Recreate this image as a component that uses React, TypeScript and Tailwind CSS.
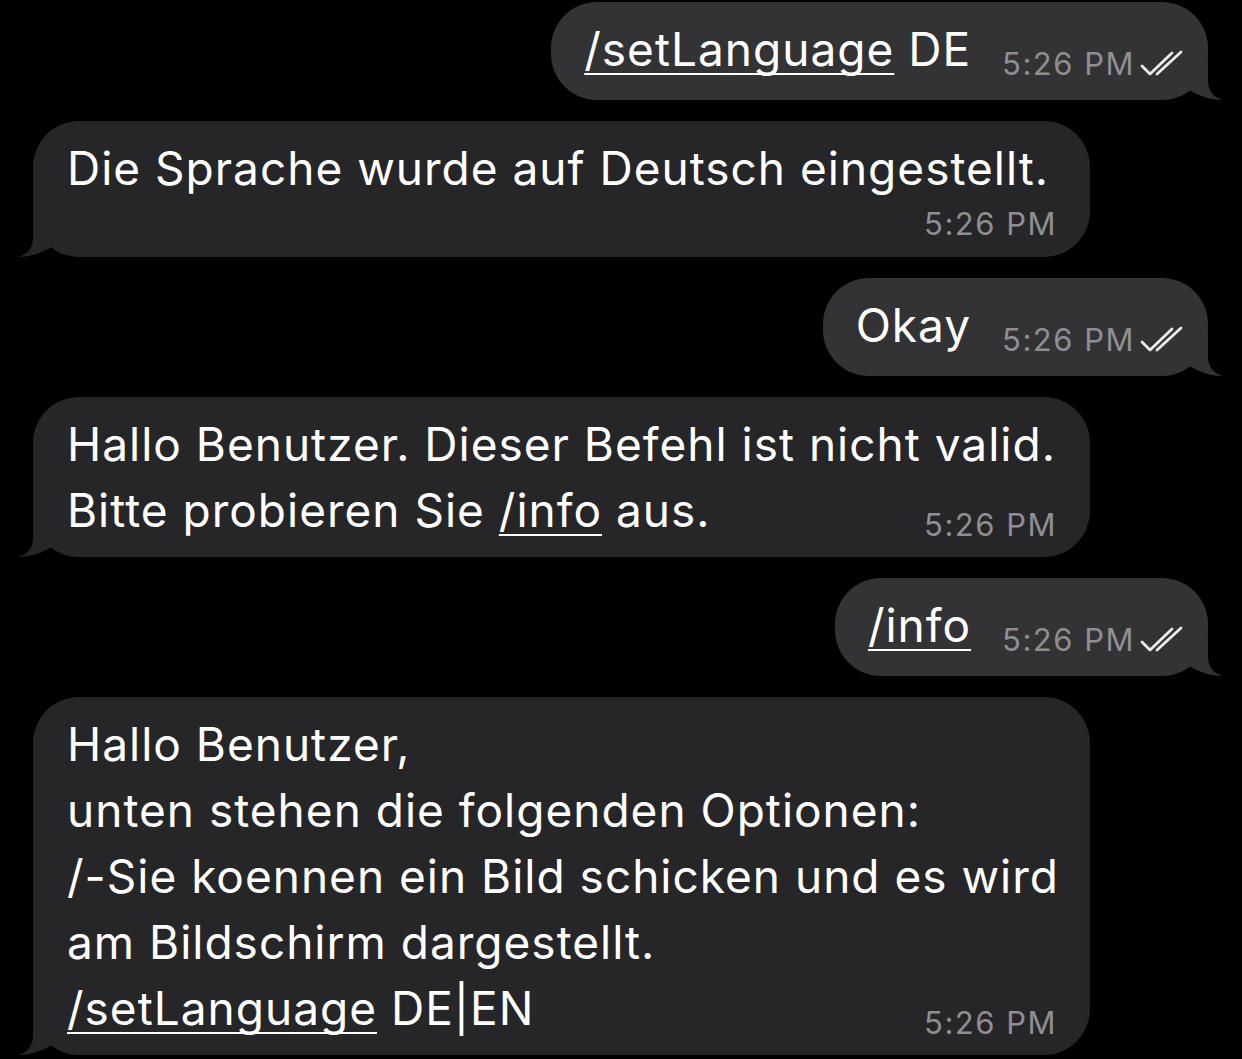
import React from "react";

const font = { fontFamily: "Inter, 'Noto Sans', sans-serif" };

const Tail = ({ side, color }: { side: "left" | "right"; color: string }) => (
  <svg
    width="60"
    height="40"
    viewBox="0 0 60 40"
    className={
      side === "left"
        ? "absolute bottom-0 left-[-15px]"
        : "absolute bottom-0 right-[-15px] -scale-x-100"
    }
  >
    <path
      d="M15 0 L15 20 C15 31 10 37 0 40 C10 40 22 37 33 30.5 L45 0 Z"
      fill={color}
    />
  </svg>
);

const Checks = () => (
  <svg width="46" height="28" viewBox="0 0 46 28" className="relative top-[1px] ml-[4px] mb-[6px]">
    <path
      d="M3 17 L11 25 L33 4 M18 25 L42 3"
      stroke="#ececee"
      strokeWidth="2.8"
      fill="none"
      strokeLinecap="round"
      strokeLinejoin="round"
    />
  </svg>
);

const Link = ({ children }: { children: React.ReactNode }) => (
  <span className="underline decoration-2 underline-offset-[7px] [text-decoration-skip-ink:none]">
    {children}
  </span>
);

const Time = () => (
  <span className="whitespace-nowrap text-[31px] leading-[36px] tracking-[1.5px] text-[#8e8e93]">5:26 PM</span>
);

const Outgoing = ({ children }: { children: React.ReactNode }) => (
  <div className="flex justify-end pr-[34px]">
    <div className="relative flex h-[98px] items-end rounded-[46px] bg-[#333335] pl-[33px] pr-[23px] pb-[18px]">
      <Tail side="right" color="#333335" />
      <span className="relative mr-[31px] whitespace-nowrap text-[46px] leading-[66px] tracking-[1px] text-white">
        {children}
      </span>
      <span className="relative flex items-end">
        <Time />
        <Checks />
      </span>
    </div>
  </div>
);

const Incoming = ({
  lines,
  timeOwnRow,
}: {
  lines: React.ReactNode[];
  timeOwnRow?: boolean;
}) => {
  const last = lines[lines.length - 1];
  const head = timeOwnRow ? lines : lines.slice(0, -1);
  return (
    <div className="flex pl-[33px]">
      <div className="relative w-[1057px] rounded-[46px] bg-[#262628] pl-[34px] pr-[33px] pt-[14px] pb-[14px] text-white">
        <Tail side="left" color="#262628" />
        <div className="relative whitespace-nowrap text-[46px] leading-[66px] tracking-[1px]">
          {head.map((l, i) => (
            <div key={i}>{l}</div>
          ))}
          {timeOwnRow ? (
            <div className="flex justify-end pt-[5px] pb-[1px]">
              <Time />
            </div>
          ) : (
            <div className="flex items-end justify-between">
              <span>{last}</span>
              <span className="relative top-[9px]">
                <Time />
              </span>
            </div>
          )}
        </div>
      </div>
    </div>
  );
};

export default function App() {
  return (
    <div
      style={font}
      className="flex h-[1059px] w-[1242px] flex-col gap-[21px] overflow-hidden bg-black pt-[2px]"
    >
      <Outgoing>
        <Link>/setLanguage</Link> DE
      </Outgoing>
      <Incoming lines={["Die Sprache wurde auf Deutsch eingestellt."]} timeOwnRow />
      <Outgoing>Okay</Outgoing>
      <Incoming
        lines={[
          "Hallo Benutzer. Dieser Befehl ist nicht valid.",
          <>
            Bitte probieren Sie <Link>/info</Link> aus.
          </>,
        ]}
      />
      <Outgoing>
        <Link>/info</Link>
      </Outgoing>
      <Incoming
        lines={[
          "Hallo Benutzer,",
          "unten stehen die folgenden Optionen:",
          "/-Sie koennen ein Bild schicken und es wird",
          "am Bildschirm dargestellt.",
          <>
            <Link>/setLanguage</Link> DE|EN
          </>,
        ]}
      />
    </div>
  );
}
